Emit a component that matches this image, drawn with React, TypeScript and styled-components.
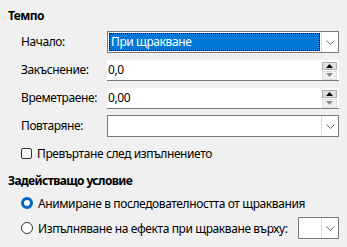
import React from "react";
import styled, { createGlobalStyle } from "styled-components";

const Global = createGlobalStyle`
  html, body { margin: 0; padding: 0; background: #f0f0f0; }
  body { font-family: "Noto Sans", "Segoe UI", sans-serif; font-size: 12px; letter-spacing: -0.4px; color: #000; }
`;

const Panel = styled.div`
  width: 347px;
  height: 247px;
  box-sizing: border-box;
  padding: 8px 8px 0 8px;
  display: flex;
  flex-direction: column;
  background: #f0f0f0;
  white-space: nowrap;
`;

const Title = styled.div<{ $mt?: number }>`
  font-weight: 700;
  letter-spacing: -0.6px;
  height: 16px;
  line-height: 16px;
  margin-top: ${(p) => p.$mt ?? 0}px;
`;

const Grid = styled.div`
  display: grid;
  grid-template-columns: 86px 232px;
  grid-auto-rows: 22px;
  row-gap: 6px;
  margin: 7px 0 0 13px;
  align-items: center;
`;

const Label = styled.label`
  line-height: 16px;
`;

const Combo = styled.div<{ $w?: number }>`
  box-sizing: border-box;
  height: 22px;
  width: ${(p) => (p.$w ? `${p.$w}px` : "100%")};
  display: flex;
  background: #fff;
  border: 1px solid #7a7a7a;
`;

const ComboValue = styled.div<{ $selected?: boolean }>`
  flex: 1;
  margin: 1px;
  padding-left: 2px;
  line-height: 18px;
  background: ${(p) => (p.$selected ? "#0078d7" : "transparent")};
  color: ${(p) => (p.$selected ? "#fff" : "#000")};
  outline: ${(p) => (p.$selected ? "1px dotted #000" : "none")};
  outline-offset: -1px;
`;

const ComboButton = styled.div`
  width: 17px;
  box-sizing: border-box;
  border-left: 1px solid #dcdcdc;
  display: flex;
  align-items: center;
  justify-content: center;
`;

const Spin = styled.div`
  box-sizing: border-box;
  height: 21px;
  width: 100%;
  display: flex;
  background: #fff;
  border-bottom: 1px solid #7a7a7a;
  padding-right: 2px;
`;

const SpinValue = styled.div`
  flex: 1;
  padding-left: 1px;
  line-height: 20px;
`;

const SpinButtons = styled.div`
  display: flex;
  flex-direction: column;
  width: 15px;
  padding-top: 2px;
`;

const SpinBtn = styled.div<{ $disabled?: boolean }>`
  box-sizing: border-box;
  height: 8.5px;
  display: flex;
  align-items: center;
  justify-content: center;
  background: ${(p) => (p.$disabled ? "#f0f0f0" : "#e1e1e1")};
  border: 1px solid ${(p) => (p.$disabled ? "#e0e0e0" : "#adadad")};
  & + & { margin-top: 1px; }
`;

const CheckRow = styled.div`
  display: flex;
  align-items: center;
  gap: 5px;
  height: 22px;
  margin: 5px 0 0 13px;
`;

const Box = styled.span`
  box-sizing: border-box;
  width: 11px;
  height: 11px;
  border: 1px solid #333;
  border-radius: 2px;
  background: #fff;
  flex: none;
`;

const RadioRow = styled.div<{ $mt: number }>`
  display: flex;
  align-items: center;
  gap: 5px;
  height: 22px;
  margin: ${(p) => p.$mt}px 0 0 13px;
`;

const Radio = styled.span<{ $on?: boolean }>`
  box-sizing: border-box;
  width: 12px;
  height: 12px;
  border-radius: 50%;
  flex: none;
  background: #fff;
  border: ${(p) => (p.$on ? "3.5px solid #0067c0" : "1px solid #333")};
`;

const Spacer = styled.div`
  flex: 1;
`;

const Chevron = () => (
  <svg width="9" height="5" viewBox="0 0 9 5">
    <path d="M0.5 0.5 L4.5 4.5 L8.5 0.5" fill="none" stroke="#6d6d6d" strokeWidth="1" />
  </svg>
);

const Tri = ({ up, color }: { up?: boolean; color: string }) => (
  <svg width="7" height="4" viewBox="0 0 7 4">
    <path d={up ? "M0 4 L3.5 0 L7 4 Z" : "M0 0 L3.5 4 L7 0 Z"} fill={color} />
  </svg>
);

export default function App() {
  return (
    <Panel>
      <Global />
      <Title>Темпо</Title>
      <Grid>
        <Label>Начало:</Label>
        <Combo>
          <ComboValue $selected>При щракване</ComboValue>
          <ComboButton>
            <Chevron />
          </ComboButton>
        </Combo>
        <Label>Закъснение:</Label>
        <Spin>
          <SpinValue>0,0</SpinValue>
          <SpinButtons>
            <SpinBtn>
              <Tri up color="#000" />
            </SpinBtn>
            <SpinBtn $disabled>
              <Tri color="#8a8a8a" />
            </SpinBtn>
          </SpinButtons>
        </Spin>
        <Label>Времетраене:</Label>
        <Spin>
          <SpinValue>0,00</SpinValue>
          <SpinButtons>
            <SpinBtn>
              <Tri up color="#000" />
            </SpinBtn>
            <SpinBtn $disabled>
              <Tri color="#8a8a8a" />
            </SpinBtn>
          </SpinButtons>
        </Spin>
        <Label>Повтаряне:</Label>
        <Combo>
          <ComboValue />
          <ComboButton>
            <Chevron />
          </ComboButton>
        </Combo>
      </Grid>
      <CheckRow>
        <Box />
        <span>Превъртане след изпълнението</span>
      </CheckRow>
      <Title $mt={9}>Задействащо условие</Title>
      <RadioRow $mt={3}>
        <Radio $on />
        <span>Анимиране в последователността от щраквания</span>
      </RadioRow>
      <RadioRow $mt={3}>
        <Radio />
        <span>Изпълняване на ефекта при щракване върху:</span>
        <Spacer />
        <Combo $w={42}>
          <ComboValue />
          <ComboButton>
            <Chevron />
          </ComboButton>
        </Combo>
      </RadioRow>
    </Panel>
  );
}
